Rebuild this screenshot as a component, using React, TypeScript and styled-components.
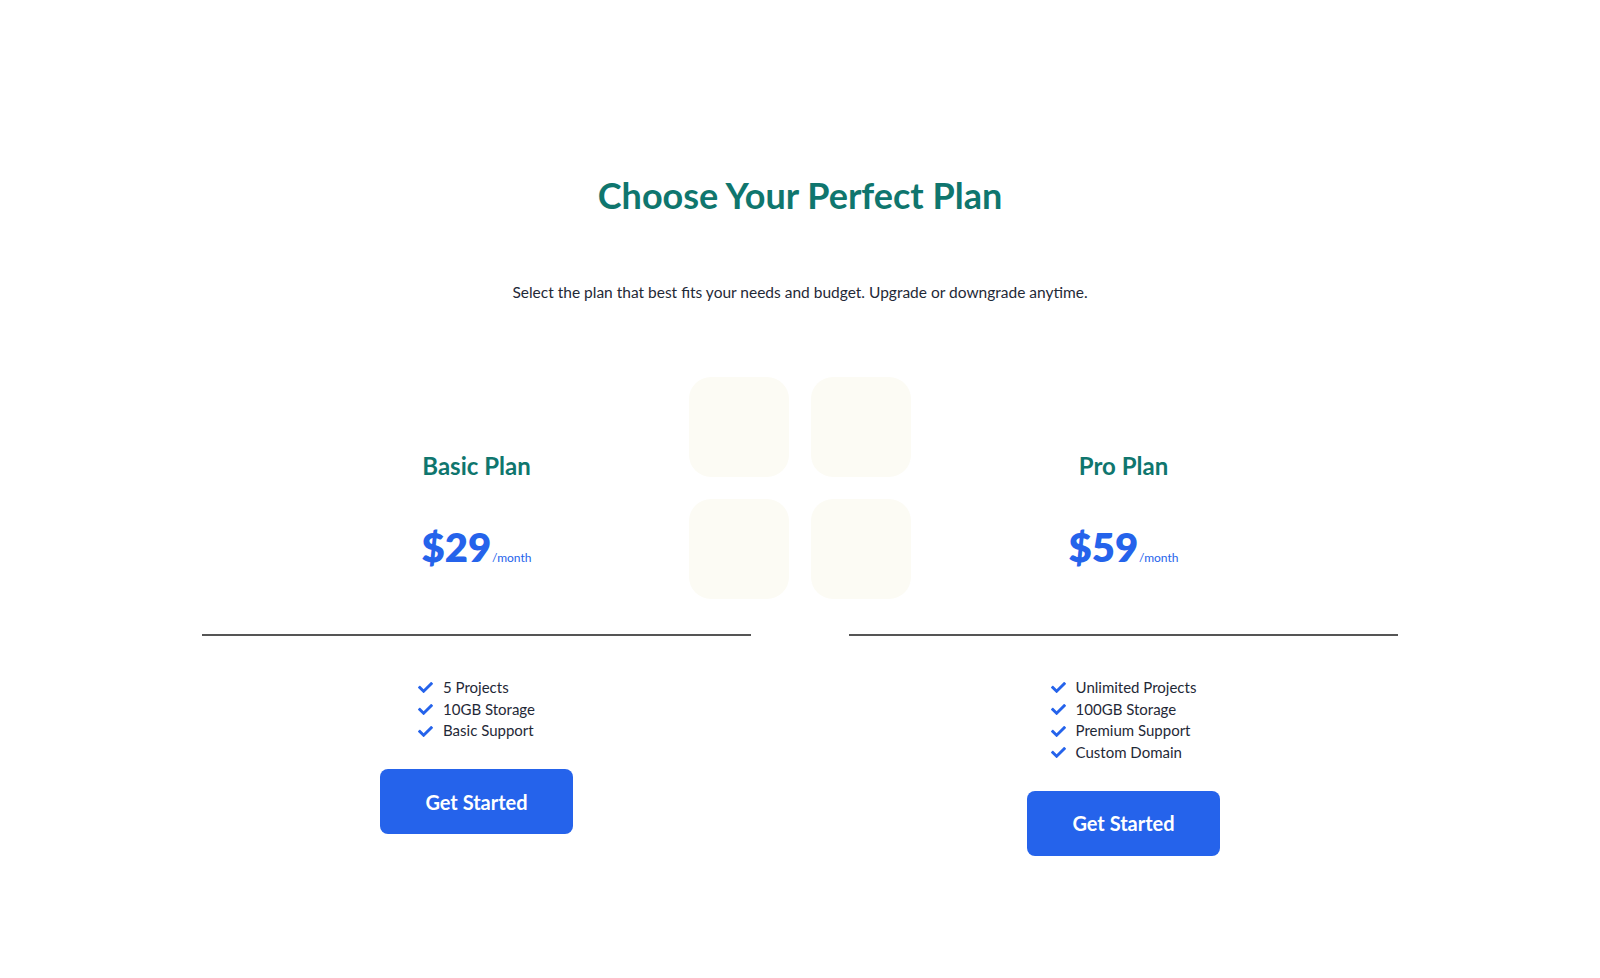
import React from "react";
import styled, { createGlobalStyle } from "styled-components";
import { FaCheck } from "react-icons/fa";

const GlobalStyle = createGlobalStyle`
  html, body { margin: 0; padding: 0; background: #ffffff; }
  body { font-family: "Lato", "Noto Sans", sans-serif; color: #1f2937; }
  * { box-sizing: border-box; }
`;

const Page = styled.main`
  min-height: 978px;
  padding-top: 173px;
  display: flex;
  flex-direction: column;
  align-items: center;
`;

const Title = styled.h1`
  margin: 0;
  font-size: 36px;
  line-height: 44px;
  font-weight: 700;
  color: #0f766e;
  text-align: center;
`;

const Subtitle = styled.p`
  margin: 63px 0 0;
  font-size: 15.5px;
  line-height: 24px;
  color: #1f2937;
  text-align: center;
`;

const Plans = styled.section`
  position: relative;
  margin-top: 147px;
  width: 1196px;
  display: grid;
  grid-template-columns: 1fr 1fr;
  column-gap: 98px;
  align-items: start;
`;

const Decoration = styled.svg`
  position: absolute;
  left: 50%;
  top: -74px;
  width: 222px;
  height: 222px;
  transform: translateX(-50%);
  z-index: 0;
`;

const Card = styled.article`
  position: relative;
  z-index: 1;
  display: flex;
  flex-direction: column;
  align-items: center;
`;

const PlanName = styled.h2`
  margin: 0;
  font-size: 24px;
  line-height: 30px;
  font-weight: 700;
  color: #0f766e;
`;

const PriceRow = styled.div`
  margin-top: 42px;
  display: flex;
  align-items: baseline;
  gap: 1px;
  color: #2563eb;
`;

const Amount = styled.span`
  font-size: 40px;
  line-height: 48px;
  font-weight: 800;
`;

const Period = styled.span`
  font-size: 12px;
  font-weight: 400;
`;

const Divider = styled.hr`
  width: 100%;
  margin: 63px 0 0;
  border: none;
  height: 2px;
  background: #555555;
`;

const Features = styled.ul`
  list-style: none;
  margin: 41px 0 0;
  padding: 0;
  display: flex;
  flex-direction: column;
`;

const Feature = styled.li`
  display: flex;
  align-items: center;
  gap: 10px;
  font-size: 15px;
  line-height: 21.7px;
  color: #1f2937;
  svg { color: #2563eb; width: 15px; height: 15px; flex: none; }
`;

const Button = styled.button`
  margin-top: 27px;
  width: 193px;
  height: 65px;
  border: none;
  border-radius: 8px;
  background: #2563eb;
  color: #ffffff;
  font-family: inherit;
  font-size: 20px;
  font-weight: 700;
  cursor: pointer;
`;

type Plan = { name: string; price: string; features: string[] };

const plans: Plan[] = [
  { name: "Basic Plan", price: "$29", features: ["5 Projects", "10GB Storage", "Basic Support"] },
  {
    name: "Pro Plan",
    price: "$59",
    features: ["Unlimited Projects", "100GB Storage", "Premium Support", "Custom Domain"],
  },
];

export default function App() {
  return (
    <>
      <GlobalStyle />
      <Page>
        <Title>Choose Your Perfect Plan</Title>
        <Subtitle>Select the plan that best fits your needs and budget. Upgrade or downgrade anytime.</Subtitle>
        <Plans>
          <Decoration viewBox="0 0 222 222" aria-hidden="true">
            <rect x="0" y="0" width="100" height="100" rx="22" fill="#fcfbf4" />
            <rect x="122" y="0" width="100" height="100" rx="22" fill="#fcfbf4" />
            <rect x="0" y="122" width="100" height="100" rx="22" fill="#fcfbf4" />
            <rect x="122" y="122" width="100" height="100" rx="22" fill="#fcfbf4" />
          </Decoration>
          {plans.map((p) => (
            <Card key={p.name}>
              <PlanName>{p.name}</PlanName>
              <PriceRow>
                <Amount>{p.price}</Amount>
                <Period>/month</Period>
              </PriceRow>
              <Divider />
              <Features>
                {p.features.map((f) => (
                  <Feature key={f}>
                    <FaCheck />
                    {f}
                  </Feature>
                ))}
              </Features>
              <Button>Get Started</Button>
            </Card>
          ))}
        </Plans>
      </Page>
    </>
  );
}
